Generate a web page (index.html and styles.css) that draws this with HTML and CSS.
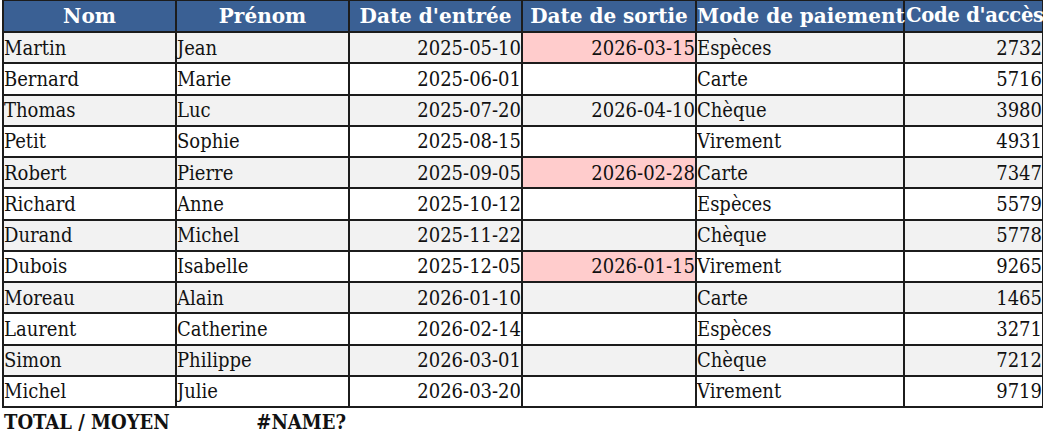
FILE: index.html
```html
<!DOCTYPE html>
<html lang="fr">
<head>
<meta charset="utf-8">
<title>Tableau</title>
<link rel="stylesheet" href="styles.css">
</head>
<body>
<table class="sheet">
  <colgroup>
    <col class="c1"><col class="c2"><col class="c3"><col class="c4"><col class="c5"><col class="c6">
  </colgroup>
  <thead>
    <tr class="head">
      <th>Nom</th><th>Prénom</th><th>Date d'entrée</th><th>Date de sortie</th><th>Mode de paiement</th><th class="tight">Code d'accès</th>
    </tr>
  </thead>
  <tbody>
    <tr class="odd"><td>Martin</td><td>Jean</td><td class="num">2025-05-10</td><td class="num alert">2026-03-15</td><td>Espèces</td><td class="num">2732</td></tr>
    <tr class="even"><td>Bernard</td><td>Marie</td><td class="num">2025-06-01</td><td class="num"></td><td>Carte</td><td class="num">5716</td></tr>
    <tr class="odd"><td>Thomas</td><td>Luc</td><td class="num">2025-07-20</td><td class="num">2026-04-10</td><td>Chèque</td><td class="num">3980</td></tr>
    <tr class="even"><td>Petit</td><td>Sophie</td><td class="num">2025-08-15</td><td class="num"></td><td>Virement</td><td class="num">4931</td></tr>
    <tr class="odd"><td>Robert</td><td>Pierre</td><td class="num">2025-09-05</td><td class="num alert">2026-02-28</td><td>Carte</td><td class="num">7347</td></tr>
    <tr class="even"><td>Richard</td><td>Anne</td><td class="num">2025-10-12</td><td class="num"></td><td>Espèces</td><td class="num">5579</td></tr>
    <tr class="odd"><td>Durand</td><td>Michel</td><td class="num">2025-11-22</td><td class="num"></td><td>Chèque</td><td class="num">5778</td></tr>
    <tr class="even"><td>Dubois</td><td>Isabelle</td><td class="num">2025-12-05</td><td class="num alert">2026-01-15</td><td>Virement</td><td class="num">9265</td></tr>
    <tr class="odd"><td>Moreau</td><td>Alain</td><td class="num">2026-01-10</td><td class="num"></td><td>Carte</td><td class="num">1465</td></tr>
    <tr class="even"><td>Laurent</td><td>Catherine</td><td class="num">2026-02-14</td><td class="num"></td><td>Espèces</td><td class="num">3271</td></tr>
    <tr class="odd"><td>Simon</td><td>Philippe</td><td class="num">2026-03-01</td><td class="num"></td><td>Chèque</td><td class="num">7212</td></tr>
    <tr class="even"><td>Michel</td><td>Julie</td><td class="num">2026-03-20</td><td class="num"></td><td>Virement</td><td class="num">9719</td></tr>
  </tbody>
  <tfoot>
    <tr class="total"><td>TOTAL / MOYEN</td><td class="num err">#NAME?</td><td></td><td></td><td></td><td></td></tr>
  </tfoot>
</table>
</body>
</html>
```

FILE: styles.css
```css
html, body {
  margin: 0;
  padding: 0;
  background: #ffffff;
}

body {
  padding-left: 2px;
  font-family: "DejaVu Serif Condensed", "DejaVu Serif", serif;
  font-size: 20px;
  color: #111111;
  overflow: hidden;
}

.sheet {
  border-collapse: collapse;
  table-layout: fixed;
  width: 1040px;
  margin-top: -1px;
}

.c1 { width: 173px; }
.c2 { width: 173px; }
.c3 { width: 173px; }
.c4 { width: 174px; }
.c5 { width: 208px; }
.c6 { width: 139px; }

.sheet th,
.sheet td {
  border: 2px solid #1c1c1c;
  padding: 0 0 0 0;
  white-space: nowrap;
  overflow: visible;
  line-height: 1;
  vertical-align: middle;
}

.head th {
  height: 30px;
  background: #3a6094;
  color: #ffffff;
  font-family: "DejaVu Serif", serif;
  font-weight: bold;
  text-align: center;
  padding: 0;
}

.head th.tight {
  font-size: 19.6px;
  letter-spacing: -0.3px;
  text-align: left;
  padding-left: 1px;
}

tbody tr { height: 31.25px; }

.odd td { background: #f2f2f2; }
.even td { background: #ffffff; }

.num { text-align: right; }

.sheet td.alert { background: #ffcccc; }

.sheet .total td {
  border: none;
  font-weight: bold;
  height: 27px;
  padding-top: 4px;
  padding-left: 1px;
  vertical-align: top;
  background: transparent;
}

.sheet .total td.err {
  padding-right: 3px;
}
```
